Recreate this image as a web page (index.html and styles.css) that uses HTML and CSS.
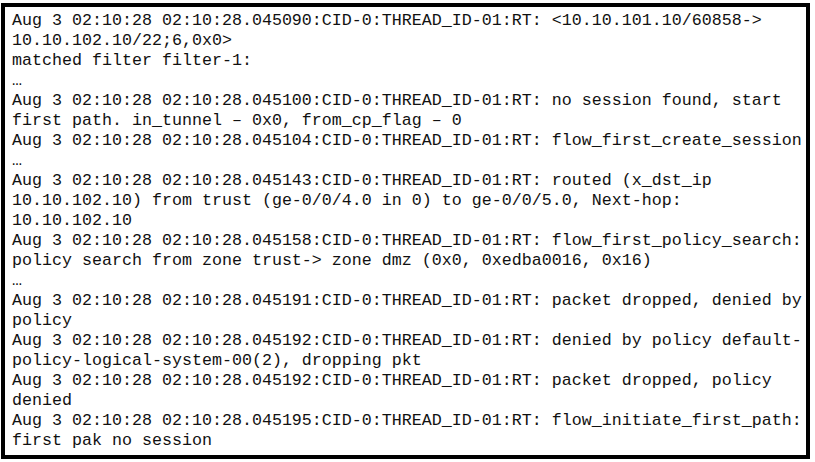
FILE: index.html
```html
<!DOCTYPE html>
<html>
<head>
<meta charset="utf-8">
<link rel="stylesheet" href="styles.css">
</head>
<body>
<div class="log-box">
<div class="log">Aug 3 02:10:28 02:10:28.045090:CID-0:THREAD_ID-01:RT: &lt;10.10.101.10/60858-&gt;
10.10.102.10/22;6,0x0&gt;
matched filter filter-1:
…
Aug 3 02:10:28 02:10:28.045100:CID-0:THREAD_ID-01:RT: no session found, start
first path. in_tunnel – 0x0, from_cp_flag – 0
Aug 3 02:10:28 02:10:28.045104:CID-0:THREAD_ID-01:RT: flow_first_create_session
…
Aug 3 02:10:28 02:10:28.045143:CID-0:THREAD_ID-01:RT: routed (x_dst_ip
10.10.102.10) from trust (ge-0/0/4.0 in 0) to ge-0/0/5.0, Next-hop:
10.10.102.10
Aug 3 02:10:28 02:10:28.045158:CID-0:THREAD_ID-01:RT: flow_first_policy_search:
policy search from zone trust-&gt; zone dmz (0x0, 0xedba0016, 0x16)
…
Aug 3 02:10:28 02:10:28.045191:CID-0:THREAD_ID-01:RT: packet dropped, denied by
policy
Aug 3 02:10:28 02:10:28.045192:CID-0:THREAD_ID-01:RT: denied by policy default-
policy-logical-system-00(2), dropping pkt
Aug 3 02:10:28 02:10:28.045192:CID-0:THREAD_ID-01:RT: packet dropped, policy
denied
Aug 3 02:10:28 02:10:28.045195:CID-0:THREAD_ID-01:RT: flow_initiate_first_path:
first pak no session</div>
</div>
</body>
</html>
```

FILE: styles.css
```css
html, body {
  margin: 0;
  padding: 0;
  background: #ffffff;
}

.log-box {
  margin: 3px 5px 0 1px;
  width: 794px;
  height: 444px;
  border: 4px solid #000000;
  background: #ffffff;
  padding: 4px 0 0 7px;
  box-sizing: content-box;
}

.log {
  font-family: "Courier New", "Liberation Mono", monospace;
  font-size: 16.667px;
  line-height: 20px;
  color: #111111;
  white-space: pre;
}
```
